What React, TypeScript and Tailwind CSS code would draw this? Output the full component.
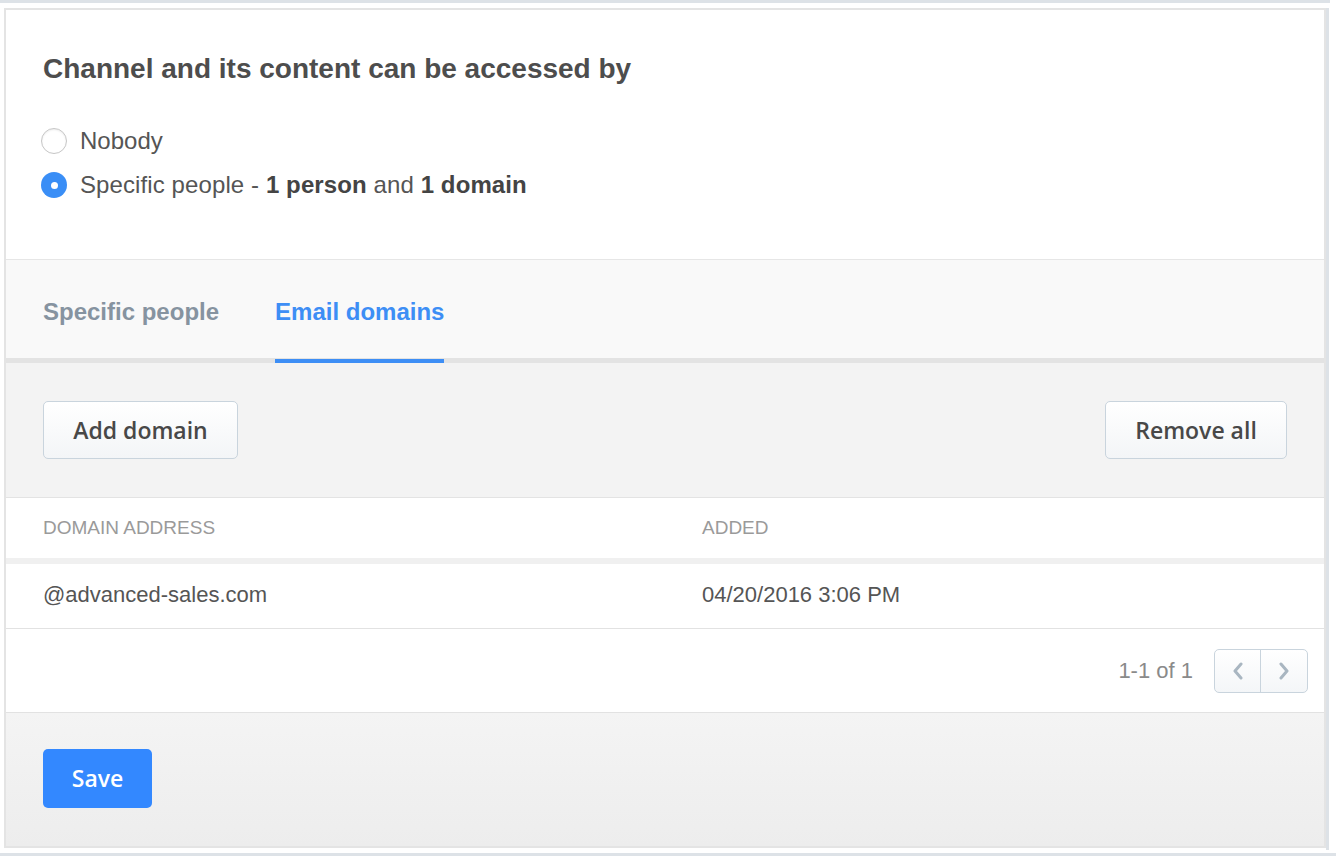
import { useState } from 'react'

const sans = 'font-["Liberation_Sans",Arial,sans-serif]'
const btnFont = 'font-["Open_Sans",sans-serif]'

type Domain = { address: string; added: string }

const DOMAINS: Domain[] = [{ address: '@advanced-sales.com', added: '04/20/2016 3:06 PM' }]

function Radio({ checked }: { checked: boolean }) {
  if (checked) {
    return (
      <span className="w-[26px] h-[26px] rounded-full bg-[#3a8ef6] flex items-center justify-center shrink-0">
        <span className="w-[7px] h-[7px] rounded-full bg-white" />
      </span>
    )
  }
  return (
    <span className="w-[26px] h-[26px] rounded-full bg-white border border-[#c6c6c6] shadow-[inset_0_1px_2px_rgba(0,0,0,0.08)] shrink-0" />
  )
}

function Button({ children, className = '' }: { children: React.ReactNode; className?: string }) {
  return (
    <button
      className={`h-[58px] rounded-[5px] border border-[#c9d4dd] bg-gradient-to-b from-white to-[#f3f5f7] text-[23px] font-semibold text-[#484848] ${btnFont} ${className}`}
    >
      {children}
    </button>
  )
}

export default function App() {
  const [tab, setTab] = useState<'people' | 'domains'>('domains')

  return (
    <div className={`w-[1336px] h-[856px] bg-white overflow-hidden ${sans}`}>
      <div className="h-[3px] w-[1330px] bg-[#dde2e7]" />
      <div className="flex mt-[5px]">
        <div className="ml-[4px] w-[1322px] h-[840px] border-2 border-[#e4e4e4] flex flex-col">
          {/* access */}
          <div className="h-[249px] pt-[42px] pl-[35px] pr-[37px] bg-white">
            <h2 className="ml-[2px] text-[28px] leading-[34px] font-bold text-[#4d4d4d]">
              Channel and its content can be accessed by
            </h2>
            <div className="mt-[33px] flex flex-col text-[24px] text-[#555]">
              <label className="h-[44px] flex items-center gap-[13px]">
                <Radio checked={false} />
                <span>Nobody</span>
              </label>
              <label className="h-[44px] flex items-center gap-[13px]">
                <Radio checked />
                <span className="tracking-[0.1px]">
                  Specific people - <b className="text-[#444]">1 person</b> and{' '}
                  <b className="text-[#444]">1 domain</b>
                </span>
              </label>
            </div>
          </div>

          {/* tabs */}
          <div className="h-[104px] flex gap-[56px] px-[37px] bg-[#f9f9f9] border-t border-[#e6e6e6] border-b-[5px] border-b-[#e3e3e3]">
            {[
              { key: 'people' as const, label: 'Specific people' },
              { key: 'domains' as const, label: 'Email domains' },
            ].map(({ key, label }) => (
              <button
                key={key}
                onClick={() => setTab(key)}
                className={`relative flex items-center pt-[6px] text-[24px] font-bold ${
                  tab === key ? 'text-[#3d8ef5]' : 'text-[#8693a0]'
                }`}
              >
                {label}
                {tab === key && <span className="absolute left-0 right-0 -bottom-[5px] h-[4px] bg-[#3d8ef5]" />}
              </button>
            ))}
          </div>

          {/* toolbar */}
          <div className="h-[135px] flex items-center justify-between px-[37px] bg-[#f3f3f3] border-b border-[#e3e3e3]">
            <Button className="w-[195px]">Add domain</Button>
            <Button className="w-[182px]">Remove all</Button>
          </div>

          {/* table */}
          <div className="h-[60px] grid grid-cols-[659px_1fr] items-center px-[37px] text-[19px] text-[#9a9a9a] uppercase bg-white">
            <span>Domain address</span>
            <span>Added</span>
          </div>
          <div className="h-[6px] bg-[#f0f0f0]" />
          {DOMAINS.map((d) => (
            <div
              key={d.address}
              className="h-[65px] pb-[4px] grid grid-cols-[659px_1fr] items-center px-[37px] text-[22px] text-[#555] bg-white border-b border-[#e2e2e2]"
            >
              <span>{d.address}</span>
              <span>{d.added}</span>
            </div>
          ))}

          {/* pagination */}
          <div className="h-[84px] flex items-center justify-end gap-[21px] pr-[16px] bg-white border-b border-[#e2e2e2]">
            <span className="text-[22px] text-[#8a8a8a]">1-1 of {DOMAINS.length}</span>
            <div className="flex h-[44px] rounded-[5px] border border-[#c9d4dd] bg-gradient-to-b from-white to-[#f4f6f8] overflow-hidden">
              <span className="w-[46px] flex items-center justify-center border-r border-[#c9d4dd]">
                <svg width="12" height="18" viewBox="0 0 12 18" fill="none">
                  <path d="M9 2 L3 9 L9 16" stroke="#a9b6c1" strokeWidth="3" strokeLinecap="round" strokeLinejoin="round" />
                </svg>
              </span>
              <span className="w-[46px] flex items-center justify-center">
                <svg width="12" height="18" viewBox="0 0 12 18" fill="none">
                  <path d="M3 2 L9 9 L3 16" stroke="#a9b6c1" strokeWidth="3" strokeLinecap="round" strokeLinejoin="round" />
                </svg>
              </span>
            </div>
          </div>

          {/* footer */}
          <div className="flex-1 pt-[36px] px-[37px] bg-gradient-to-b from-[#f4f4f4] to-[#ededed]">
            <button className={`w-[109px] h-[59px] rounded-[5px] bg-[#3388ff] text-white text-[23px] font-semibold ${btnFont}`}>
              Save
            </button>
          </div>
        </div>
        <div className="w-[3px] h-[842px] bg-[#dde2e7]" />
      </div>
      <div className="mt-[3px] h-[5px] bg-[#dde2e7]" />
    </div>
  )
}
